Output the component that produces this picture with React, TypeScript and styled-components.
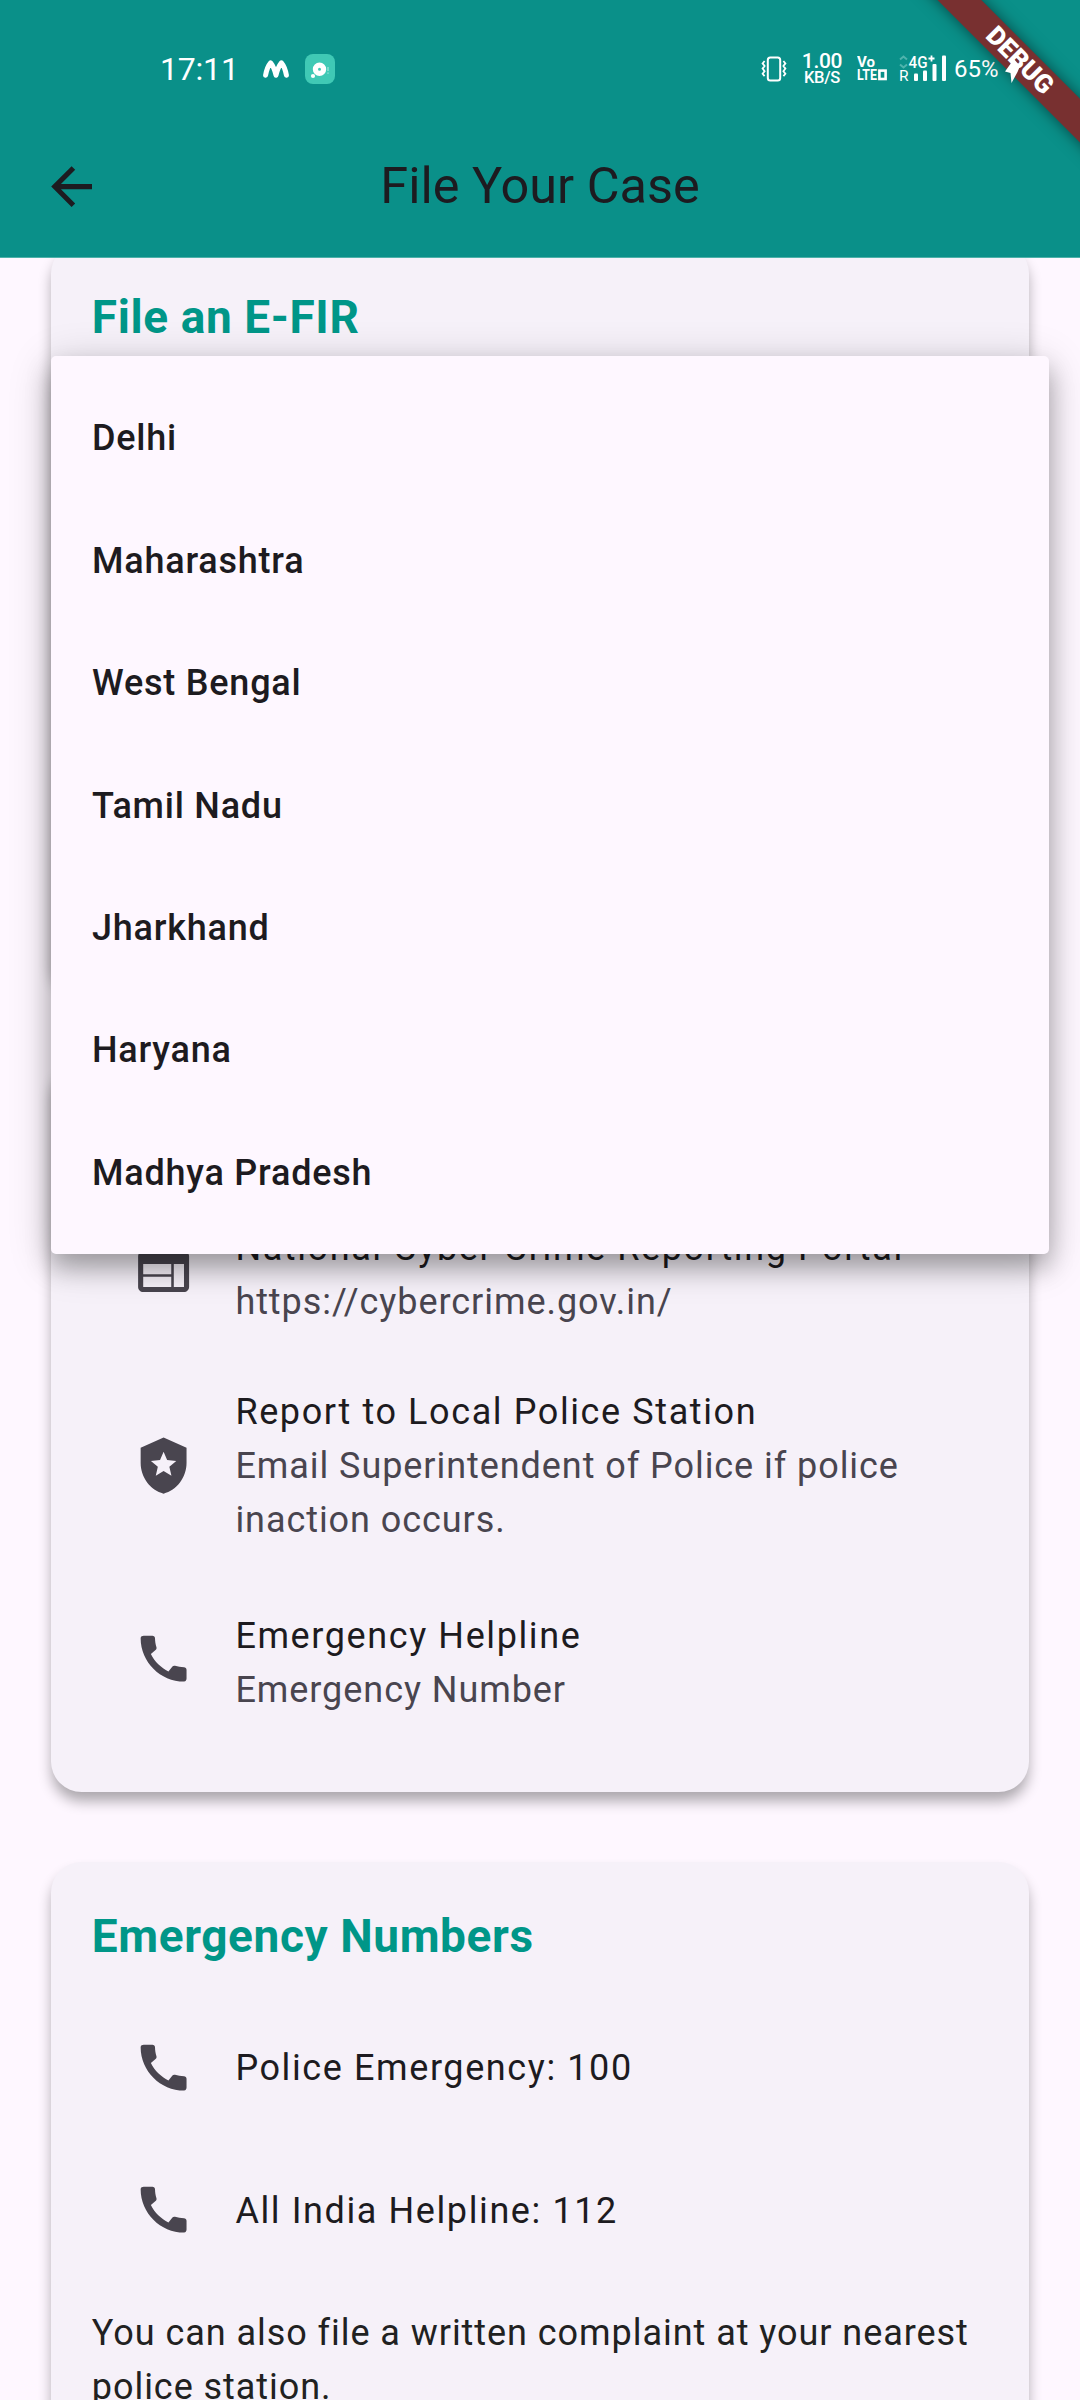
import React from "react";
import styled, { createGlobalStyle } from "styled-components";

const GlobalStyle = createGlobalStyle`
  html, body { margin: 0; padding: 0; background: #fef7ff; }
  * { box-sizing: border-box; }
`;

const Screen = styled.div`
  position: relative;
  display: flex;
  flex-direction: column;
  width: 1080px;
  height: 2400px;
  overflow: hidden;
  background: #fef7ff;
  color: #1d1b20;
  font-family: Roboto, "Liberation Sans", sans-serif;
`;

const Header = styled.header`
  flex: none;
  height: 258px;
  border-bottom: 1px solid #4db1a9;
  background: #0a9089;
`;

const StatusBar = styled.div`
  display: flex;
  align-items: center;
  height: 114.6px;
  padding: 24px 78px 0 160px;
  color: #fff;
`;

const Clock = styled.span`
  width: 103px;
  font-size: 32px;
  line-height: 38px;
  letter-spacing: -0.2px;
`;

const AppBadge = styled.span`
  display: flex;
  width: 30px;
  height: 30px;
  margin-left: 16px;
  border-radius: 8px;
  background: #40c9b5;
`;

const StatusRight = styled.div`
  display: flex;
  align-items: center;
  margin-left: auto;
`;

const NetSpeed = styled.div`
  display: flex;
  flex-direction: column;
  align-items: center;
  width: 42px;
  margin: 0 14px;
`;

const Tiny = styled.span<{ $size: number; $line: number }>`
  white-space: nowrap;
  font-size: ${(p) => p.$size}px;
  line-height: ${(p) => p.$line}px;
  font-weight: 500;
  letter-spacing: -0.3px;
`;

const Battery = styled.span`
  width: 48px;
  margin-left: 5px;
  white-space: nowrap;
  font-size: 24px;
  line-height: 28px;
`;

const Signal = styled.svg`
  margin-left: 10px;
`;

const Toolbar = styled.div`
  display: grid;
  grid-template-columns: 142px 1fr 142px;
  align-items: center;
  height: 143.6px;
`;

const BackButton = styled.button`
  display: flex;
  margin: 0 0 0 41px;
  padding: 0;
  border: 0;
  background: none;
  color: #1d1b20;
`;

const PageTitle = styled.h1`
  margin: 0;
  text-align: center;
  font-size: 50.4px;
  line-height: 64px;
  font-weight: 400;
`;

const DebugCorner = styled.div`
  position: absolute;
  top: 0;
  right: 0;
  width: 180px;
  height: 180px;
  overflow: hidden;
`;

const DebugBand = styled.div`
  position: absolute;
  top: 45px;
  left: -30px;
  display: flex;
  align-items: center;
  justify-content: center;
  width: 300px;
  height: 30.6px;
  transform: rotate(45deg);
  background: #783030;
  box-shadow: 0 0 15px rgba(0, 0, 0, 0.5);
  color: #fff;
  font-size: 26px;
  line-height: 30px;
  font-weight: 900;
`;

const Bolt = styled.svg`
  position: absolute;
  top: 58px;
  left: 103px;
`;

const Body = styled.main`
  flex: 1;
  min-height: 0;
  overflow: hidden;
`;

const Scroller = styled.div`
  display: flex;
  flex-direction: column;
  gap: 70.6px;
  margin-top: -14.6px;
  padding: 0 51px;
`;

const Card = styled.section<{ $height: number; $end?: boolean }>`
  display: flex;
  flex: none;
  flex-direction: column;
  justify-content: ${(p) => (p.$end ? "flex-end" : "flex-start")};
  height: ${(p) => p.$height}px;
  padding: 41px 40.8px;
  border-radius: 30.6px;
  background: #f6f1f9;
  box-shadow: 0 10px 14px -1px rgba(0, 0, 0, 0.33);
`;

const Heading = styled.h2`
  margin: 0 0 25.5px;
  color: #009688;
  font-size: 46px;
  line-height: 67px;
  font-weight: 700;
  letter-spacing: 0.6px;
`;

const Tile = styled.div<{ $height: number }>`
  display: flex;
  align-items: center;
  gap: 41.6px;
  height: ${(p) => p.$height}px;
  padding: 0 0 0 40.8px;
  color: #49454f;
`;

const TileText = styled.div<{ $shift?: number }>`
  flex: 1;
  min-width: 0;
  padding-top: ${(p) => p.$shift ?? 1.4}px;
  font-size: 36px;
  line-height: 54px;
  white-space: nowrap;
`;

const TileTitle = styled.div`
  color: #1d1b20;
  letter-spacing: 1.6px;
`;

const TileSub = styled.div`
  letter-spacing: 0.94px;
`;

const Note = styled.p`
  margin: 25px 0 0;
  color: #212121;
  font-size: 36px;
  line-height: 54px;
  letter-spacing: 0.95px;
  white-space: nowrap;
`;

const Menu = styled.ul`
  position: absolute;
  top: 356px;
  left: 51px;
  width: 998.4px;
  height: 897.6px;
  margin: 0;
  padding: 20.4px 0;
  list-style: none;
  border-radius: 5px;
  background: #fef7ff;
  box-shadow: 0 14px 24px rgba(0, 0, 0, 0.26), 0 8px 44px rgba(0, 0, 0, 0.2);
`;

const MenuItem = styled.li`
  display: flex;
  align-items: center;
  height: 122.4px;
  padding: 1.6px 41px 0;
  font-size: 36px;
  line-height: 54px;
  font-weight: 500;
  letter-spacing: 0.78px;
`;

const glyphs = {
  back: "M20 11H7.83l5.59-5.59L12 4l-8 8 8 8 1.41-1.41L7.83 13H20v-2z",
  phone:
    "M20.01 15.38c-1.23 0-2.42-.2-3.53-.56-.35-.12-.74-.03-1.01.24l-1.57 1.97c-2.83-1.35-5.48-3.9-6.89-6.83l1.95-1.66c.27-.28.35-.67.24-1.02-.37-1.11-.56-2.3-.56-3.53 0-.54-.45-.99-.99-.99H4.19C3.65 3 3 3.24 3 3.99 3 13.28 10.73 21 20.01 21c.71 0 .99-.63.99-1.18v-3.45c0-.54-.45-.99-.99-.99z",
  web: "M20 4H4c-1.1 0-1.99.9-1.99 2L2 18c0 1.1.9 2 2 2h16c1.1 0 2-.9 2-2V6c0-1.1-.9-2-2-2zm-5 14H4v-4h11v4zm0-5H4V9h11v4zm5 5h-4V9h4v9z",
  shield:
    "M12 1 3 5v6c0 5.55 3.84 10.74 9 12 5.16-1.26 9-6.45 9-12V5l-9-4zm3.08 15L12 14.15 8.93 16l.81-3.5-2.71-2.34 3.58-.31L12 6.55l1.39 3.29 3.58.31-2.71 2.35.82 3.5z",
};

function Glyph({ name }: { name: keyof typeof glyphs }) {
  return (
    <svg width="61.2" height="61.2" viewBox="0 0 24 24" fill="currentColor">
      <path d={glyphs[name]} />
    </svg>
  );
}

const states = ["Delhi", "Maharashtra", "West Bengal", "Tamil Nadu", "Jharkhand", "Haryana", "Madhya Pradesh"];

export default function App() {
  return (
    <Screen>
      <GlobalStyle />
      <Header>
        <StatusBar>
          <Clock>17:11</Clock>
          <svg width="26" height="18" viewBox="0 0 26 18" fill="none" stroke="#fff" strokeWidth="5" strokeLinecap="round" strokeLinejoin="round">
            <path d="M2.6 15.2Q4 7 7.6 2.8Q11 7 13 15.2Q15 7 18.4 2.8Q22 7 23.4 15.2" />
          </svg>
          <AppBadge>
            <svg width="30" height="30" viewBox="0 0 30 30">
              <circle cx="14.5" cy="15.3" r="4.1" fill="none" stroke="#fff" strokeWidth="5.2" />
              <circle cx="8" cy="22" r="2.1" fill="#fff" />
              <path d="M23 13v4M23 18.5v1.2" stroke="#a5e6dc" strokeWidth="1.2" />
            </svg>
          </AppBadge>
          <StatusRight>
            <svg width="26" height="26" viewBox="0 0 26 26" fill="none" stroke="#fff" strokeWidth="2">
              <rect x="6.8" y="1.5" width="12.4" height="23" rx="2.5" />
              <path strokeWidth="1.8" d="M3.6 5l-2 2.4 2 2.6-2 2.6 2 2.6-2 2.6 2 2.4M22.4 5l2 2.4-2 2.6 2 2.6-2 2.6 2 2.6-2 2.4" />
            </svg>
            <NetSpeed>
              <Tiny $size={21} $line={17}>1.00</Tiny>
              <Tiny $size={16.5} $line={16}>KB/S</Tiny>
            </NetSpeed>
            <svg width="32" height="30" viewBox="0 0 32 30" fill="#fff" fontFamily="Roboto, sans-serif" fontWeight="700">
              <text x="0" y="13" fontSize="15.5" textLength="18" lengthAdjust="spacingAndGlyphs">Vo</text>
              <text x="0" y="26.4" fontSize="15.5" textLength="20" lengthAdjust="spacingAndGlyphs">LTE</text>
              <rect x="22.4" y="16.6" width="6.2" height="8.4" fill="none" stroke="#fff" strokeWidth="2.6" />
            </svg>
            <Signal width="50" height="30" viewBox="0 0 50 30" fill="#fff" fontFamily="Roboto, sans-serif">
              <path d="M1 5.5l3.5-3 3.5 3M1 10.5l3.5 3 3.5-3" fill="none" stroke="#4fb3ad" strokeWidth="2" />
              <text x="0" y="27" fontSize="15.5">R</text>
              <text x="9.5" y="13.5" fontSize="17" fontWeight="500" textLength="19" lengthAdjust="spacingAndGlyphs">4G</text>
              <path d="M29.5 4.5h6M32.5 1.5v6" stroke="#fff" strokeWidth="1.8" />
              <rect x="15" y="19.5" width="4" height="7.5" rx="1" />
              <rect x="24" y="16.5" width="4" height="10.5" rx="1" />
              <rect x="33.5" y="10" width="4" height="17" rx="1" />
              <rect x="43" y="1.5" width="4" height="25.5" rx="1" />
            </Signal>
            <Battery>65%</Battery>
          </StatusRight>
        </StatusBar>
        <Toolbar>
          <BackButton aria-label="Back">
            <Glyph name="back" />
          </BackButton>
          <PageTitle>File Your Case</PageTitle>
        </Toolbar>
      </Header>

      <Body>
        <Scroller>
          <Card $height={745}>
            <Heading>File an E-FIR</Heading>
          </Card>
          <Card $height={732.8} $end>
            <Tile $height={183.6}>
              <Glyph name="web" />
              <TileText $shift={6.6}>
                <TileTitle>National Cyber Crime Reporting Portal</TileTitle>
                <TileSub>https://cybercrime.gov.in/</TileSub>
              </TileText>
            </Tile>
            <Tile $height={203.6}>
              <Glyph name="shield" />
              <TileText>
                <TileTitle>Report to Local Police Station</TileTitle>
                <TileSub>
                  Email Superintendent of Police if police
                  <br />
                  inaction occurs.
                </TileSub>
              </TileText>
            </Tile>
            <Tile $height={183.6}>
              <Glyph name="phone" />
              <TileText $shift={7}>
                <TileTitle>Emergency Helpline</TileTitle>
                <TileSub>Emergency Number</TileSub>
              </TileText>
            </Tile>
          </Card>
          <Card $height={620}>
            <Heading>Emergency Numbers</Heading>
            <Tile $height={142.8}>
              <Glyph name="phone" />
              <TileText>
                <TileTitle>Police Emergency: 100</TileTitle>
              </TileText>
            </Tile>
            <Tile $height={142.8}>
              <Glyph name="phone" />
              <TileText>
                <TileTitle>All India Helpline: 112</TileTitle>
              </TileText>
            </Tile>
            <Note>
              You can also file a written complaint at your nearest
              <br />
              police station.
            </Note>
          </Card>
        </Scroller>
      </Body>

      <Menu>
        {states.map((s) => (
          <MenuItem key={s}>{s}</MenuItem>
        ))}
      </Menu>

      <DebugCorner>
        <DebugBand>DEBUG</DebugBand>
        <Bolt width="22" height="26" viewBox="0 0 22 26" fill="#fff">
          <path d="M2 13.5 11 1l6 7-2.5 6-6 11-1-10z" />
        </Bolt>
      </DebugCorner>
    </Screen>
  );
}
